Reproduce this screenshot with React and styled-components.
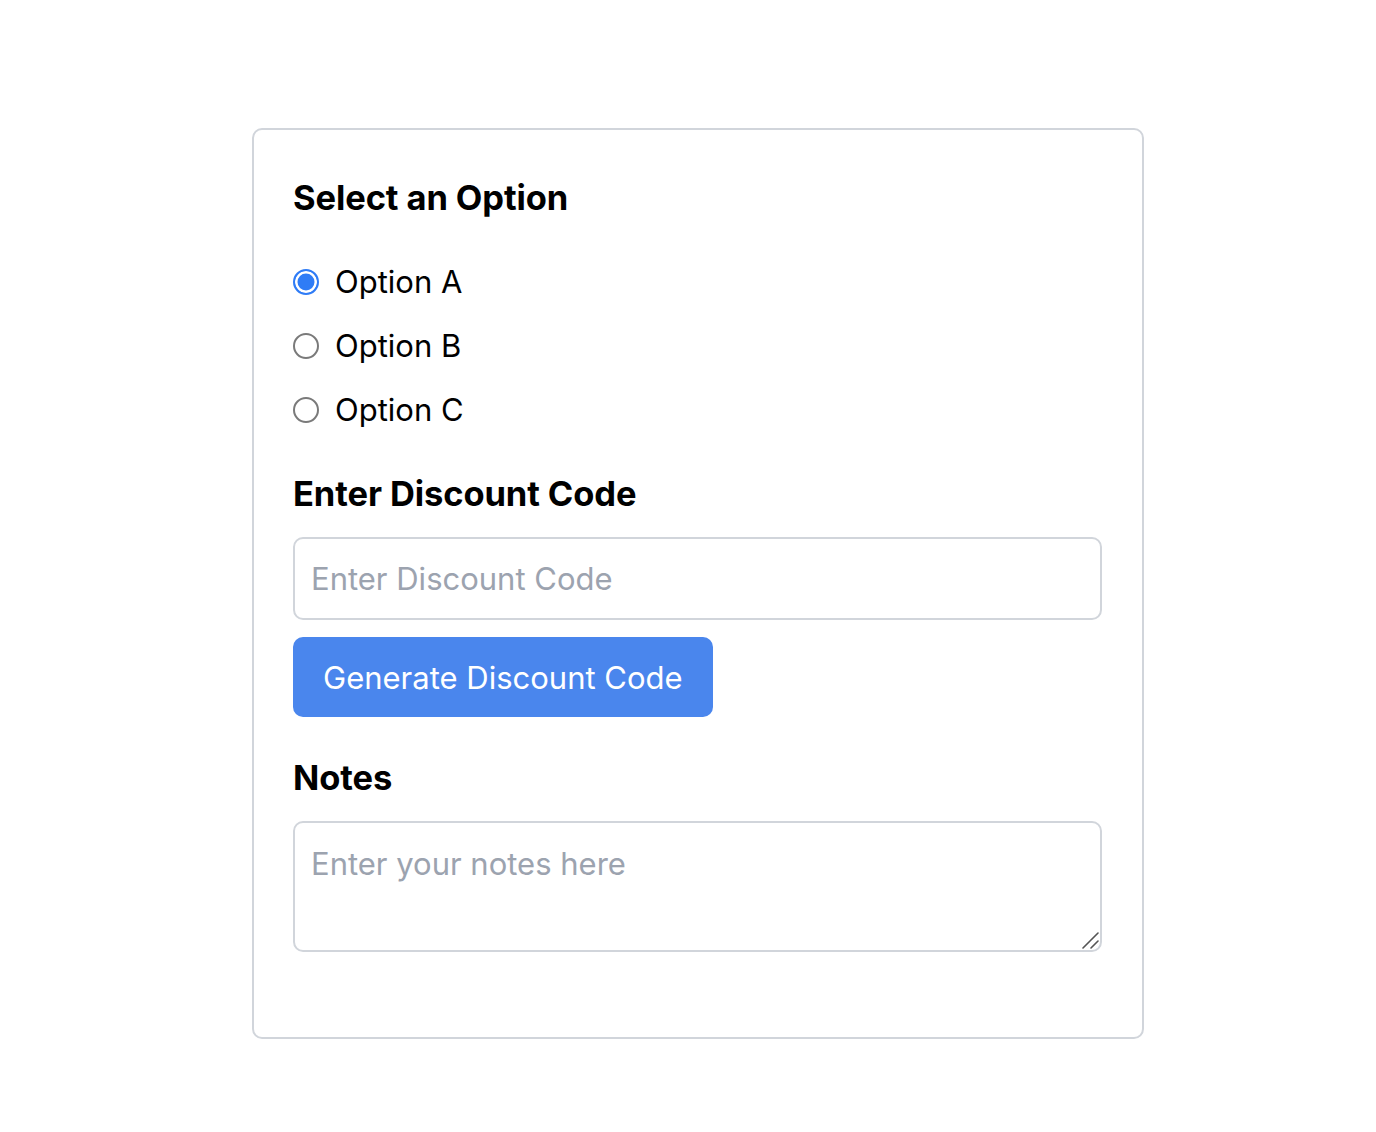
import React, {useState} from 'react';
import styled, {createGlobalStyle} from 'styled-components';

const GlobalStyle = createGlobalStyle`
    body {
        margin: 0;
        background: #fff;
        font-family: Inter, "Noto Sans", sans-serif;
        color: #000;
    }
`;

const Page = styled.div`
    display: flex;
    justify-content: center;
    padding: 128px 0 0 20px;
`;

const Card = styled.div`
    width: 892px;
    box-sizing: border-box;
    border: 2px solid #d1d5db;
    border-radius: 10px;
    padding: 48px 40px 85px 39px;
`;

const Heading = styled.h2`
    margin: 0 0 ${props => props.gap || 24}px 0;
    font-size: 34.5px;
    font-weight: 700;
    line-height: 40px;
    letter-spacing: -0.1px;
`;

const OptionList = styled.div`
    display: flex;
    flex-direction: column;
    gap: 24px;
    margin-bottom: 44px;
`;

const OptionRow = styled.label`
    display: flex;
    align-items: center;
    gap: 16px;
    font-size: 31px;
    line-height: 40px;
    cursor: pointer;
`;

const Radio = styled.input`
    appearance: none;
    box-sizing: border-box;
    width: 26px;
    height: 26px;
    margin: 0;
    border: 2px solid #7a7a7a;
    border-radius: 50%;
    background: #fff;
    cursor: pointer;
    &:checked {
        border-color: #2f7cf6;
        background: #2f7cf6;
        box-shadow: inset 0 0 0 2.5px #fff;
    }
`;

const TextInput = styled.input`
    display: block;
    width: 100%;
    box-sizing: border-box;
    height: 83px;
    padding: 0 16px;
    border: 2px solid #d1d5db;
    border-radius: 10px;
    font-family: inherit;
    font-size: 31px;
    outline: none;
    &::placeholder {
        color: #9ca3af;
    }
`;

const Button = styled.button`
    display: block;
    margin: 17px 0 41px 0;
    height: 80px;
    padding: 0 30px;
    border: none;
    border-radius: 10px;
    background: #4a86ed;
    color: #fff;
    font-family: inherit;
    font-size: 31px;
    cursor: pointer;
`;

const NotesWrap = styled.div`
    position: relative;
`;

const Notes = styled.textarea`
    display: block;
    width: 100%;
    box-sizing: border-box;
    height: 131px;
    padding: 21px 16px;
    border: 2px solid #d1d5db;
    border-radius: 10px;
    font-family: inherit;
    font-size: 31px;
    line-height: 40px;
    outline: none;
    resize: none;
    &::placeholder {
        color: #9ca3af;
    }
`;

const Grip = styled.svg`
    position: absolute;
    right: 2px;
    bottom: 2px;
    pointer-events: none;
`;

const options = ['Option A', 'Option B', 'Option C'];

function App() {
    const [selected, setSelected] = useState('Option A');
    const [code, setCode] = useState('');

    return (
        <Page>
            <GlobalStyle/>
            <Card>
                <Heading gap={44}>Select an Option</Heading>
                <OptionList>
                    {options.map(opt => (
                        <OptionRow key={opt}>
                            <Radio
                                type="radio"
                                name="option"
                                checked={selected === opt}
                                onChange={() => setSelected(opt)}/>
                            {opt}
                        </OptionRow>
                    ))}
                </OptionList>
                <Heading gap={23}>Enter Discount Code</Heading>
                <TextInput
                    placeholder="Enter Discount Code"
                    value={code}
                    onChange={e => setCode(e.target.value)}/>
                <Button onClick={() => setCode('SAVE' + Math.floor(Math.random() * 9000 + 1000))}>
                    Generate Discount Code
                </Button>
                <Heading gap={23}>Notes</Heading>
                <NotesWrap>
                    <Notes placeholder="Enter your notes here"/>
                    <Grip width="18" height="18" viewBox="0 0 18 18">
                        <path d="M1 16 L16 1 M9 16 L16 9" stroke="#555" strokeWidth="1.6" strokeLinecap="round"/>
                    </Grip>
                </NotesWrap>
            </Card>
        </Page>
    );
}

export default App;
